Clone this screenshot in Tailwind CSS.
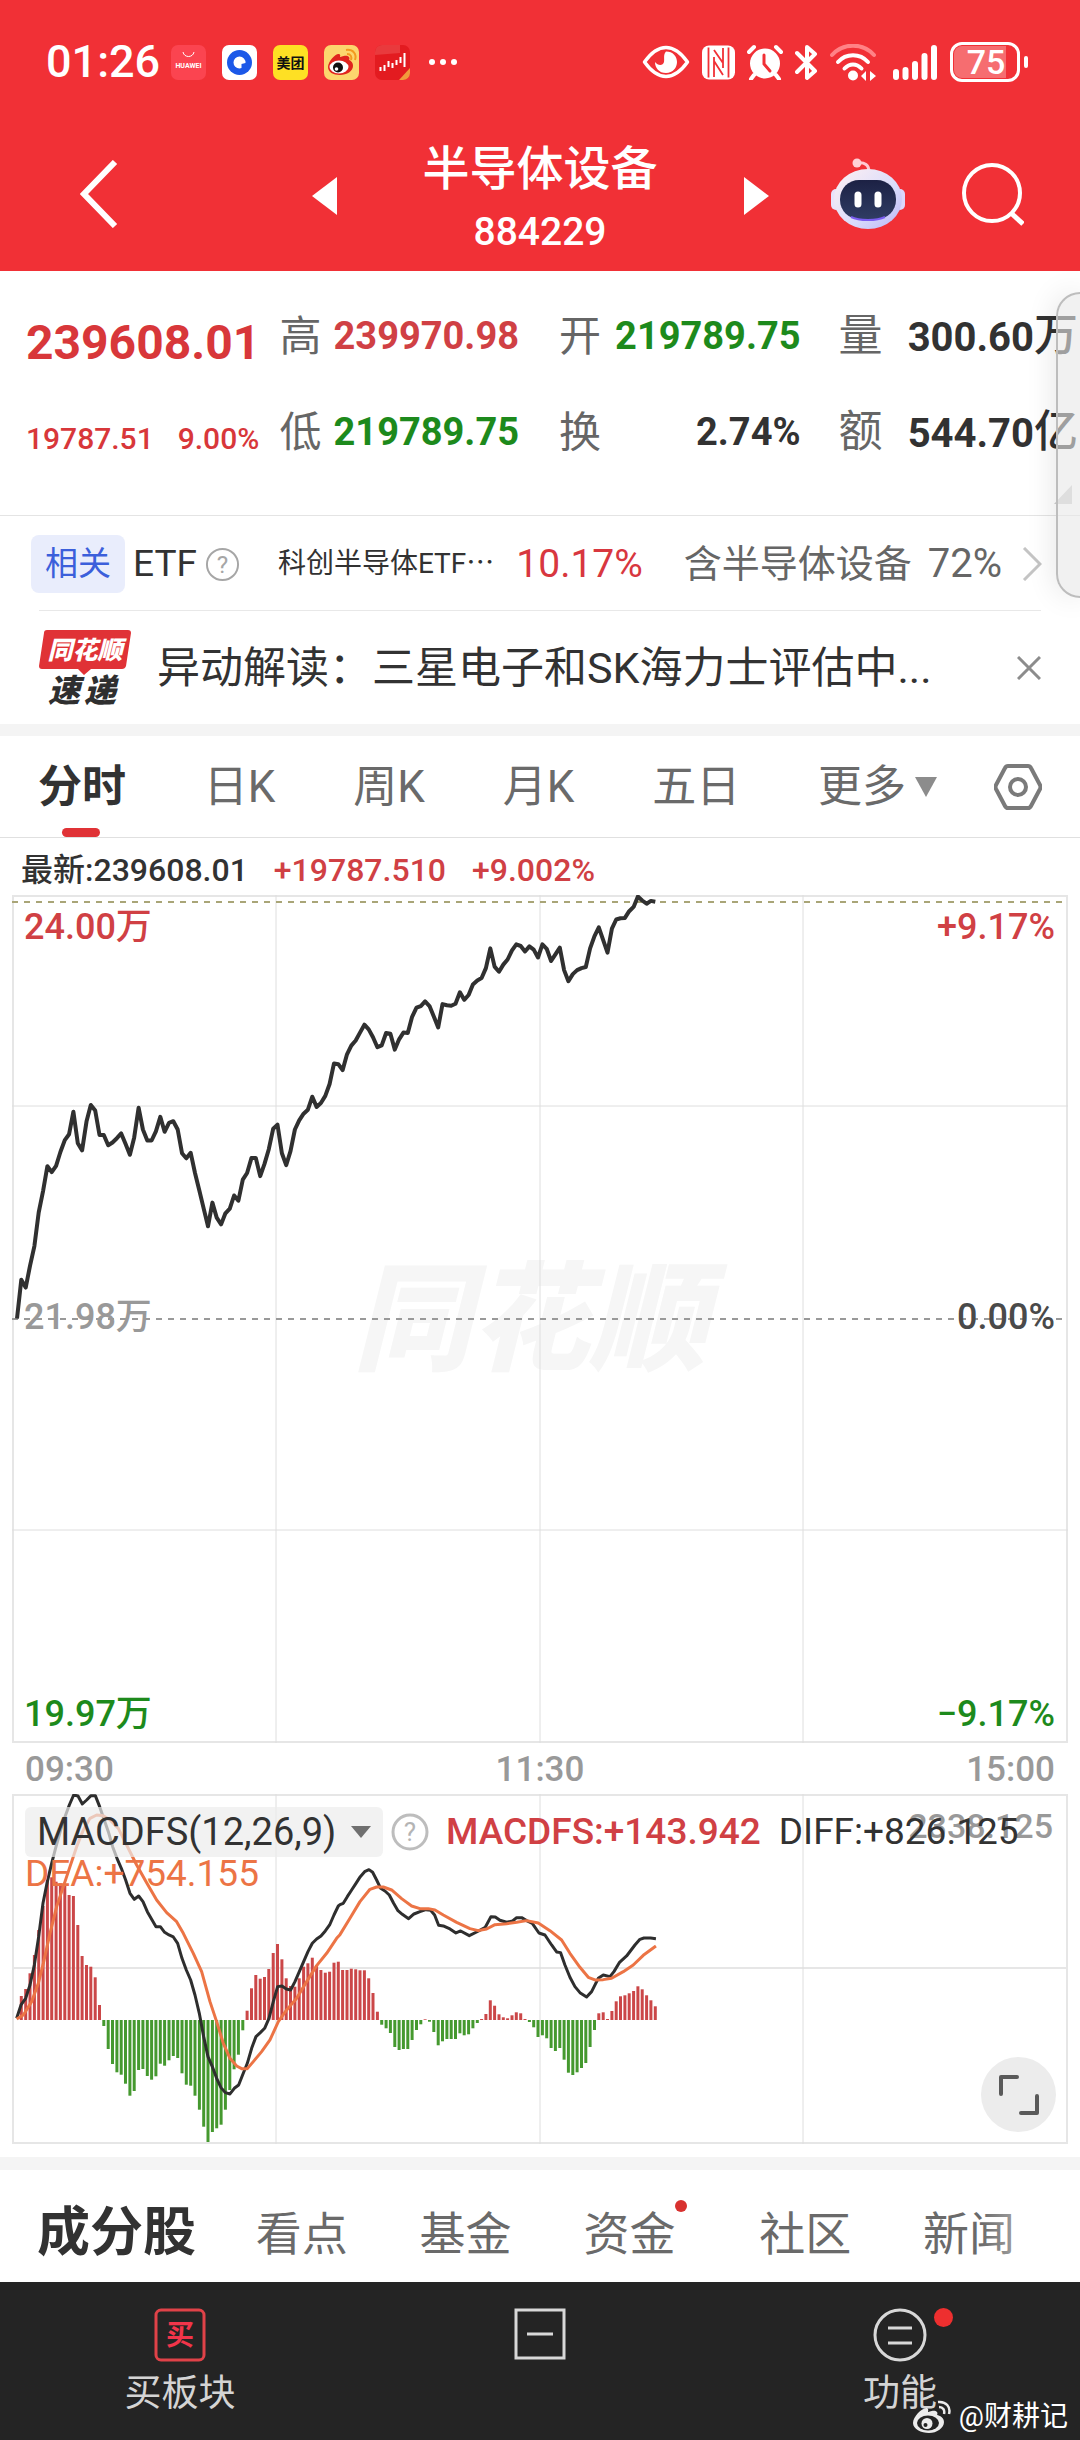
<!DOCTYPE html>
<html lang="zh-CN">
<head>
    <meta charset="UTF-8">
    <meta name="viewport" content="width=device-width, initial-scale=1.0">
    <title>半导体设备 884229</title>
    <script src="https://cdn.jsdelivr.net/npm/@tailwindcss/browser@4"></script>
</head>
<body class="bg-white text-[#323232] font-['Roboto','Noto_Sans_CJK_SC',sans-serif] overflow-x-hidden">

    <!-- Header -->
    <header class="bg-[#f13036] text-white pt-11 pb-4">
        <div class="flex items-center h-9 pl-[46px] pr-[52px]">
            <span class="text-[45px] leading-9 font-medium">01:26</span>
            <div class="flex items-center gap-4 ml-[11px]">
                <svg class="w-[35px] h-[35px]" viewBox="0 0 35 35">
                    <rect width="35" height="35" rx="7" fill="#fb4450"/>
                    <path d="M12 7c1 6 10 6 11 0" fill="none" stroke="#fff" stroke-width="1"/>
                    <text x="17.5" y="23" text-anchor="middle" fill="#fff" class="text-[7px] font-bold">HUAWEI</text>
                </svg>
                <svg class="w-[35px] h-[35px]" viewBox="0 0 35 35">
                    <rect width="35" height="35" rx="7" fill="#fff"/>
                    <circle cx="17.5" cy="17.5" r="12.5" fill="#1c58e8"/>
                    <path d="M17.5 11.500a6 6 0 1 0 0 12l2-.5 0-4 4-1a6 6 0 0 0-6-6.500z" fill="#fff"/>
                </svg>
                <svg class="w-[35px] h-[35px]" viewBox="0 0 35 35">
                    <rect width="35" height="35" rx="7" fill="#fee024"/>
                    <text x="17.5" y="23" text-anchor="middle" fill="#111" class="text-[14px] font-bold">美团</text>
                </svg>
                <svg class="w-[35px] h-[35px]" viewBox="0 0 35 35">
                    <rect width="35" height="35" rx="7" fill="#fcd66e"/>
                    <path d="M4 22c0-6 8-14 11-13 2 .5 1 3 1 3s7-3 9 0c1 1.500 0 3 0 3s4 1 4 6c0 5-6 9-13 9S4 27 4 22z" fill="#e0241e"/>
                    <ellipse cx="15" cy="22" rx="9.500" ry="6.500" fill="#fff"/>
                    <circle cx="14" cy="22.500" r="5" fill="#111"/>
                    <circle cx="12.500" cy="24" r="1.800" fill="#fff"/>
                    <path d="M23 9c4 0 5 3 4 6M22 5c7-1 11 4 9 10" fill="none" stroke="#f39a1f" stroke-width="2"/>
                </svg>
                <svg class="w-[35px] h-[35px]" viewBox="0 0 35 35">
                    <rect width="35" height="35" rx="7" fill="#e31b20"/>
                    <path d="M0 10V7a7 7 0 0 1 7-7h18v8z" fill="#e93a3d"/>
                    <path d="M35 23v5a7 7 0 0 1-7 7h-4z" fill="#f19a3c"/>
                    <path d="M5.500 22v4M9.500 20v6M13.500 16v6M17.500 18v5M21.500 15v5M25.500 12v6M29.500 8v14" stroke="#fff" stroke-width="2"/>
                </svg>
            </div>
            <svg class="w-8 h-2 ml-4" viewBox="0 0 32 8" fill="#fff"><circle cx="6" cy="4" r="3"/><circle cx="17" cy="4" r="3"/><circle cx="28" cy="4" r="3"/></svg>

            <div class="flex items-center gap-3 ml-auto">
                <svg class="w-12 h-9" viewBox="0 0 48 36">
                    <path d="M2.500 18C10 7.500 17 3.500 24 3.500S38 7.500 45.500 18C38 28.500 31 32.500 24 32.500S10 28.500 2.500 18z" fill="none" stroke="#fff" stroke-width="3.500" stroke-linejoin="round"/>
                    <path d="M24 7.500c7 0 11 5 11 10.500S31 29 24 29s-11-5-11-11c3 4 8 4 9 0 .7-4-1-7 2-10.500z" fill="#fff"/>
                </svg>
                <svg class="w-[33px] h-[35px]" viewBox="0 0 33 35">
                    <rect y=".5" width="33" height="34" rx="7" fill="#fff"/>
                    <path d="M6.500 2.500v30M26.500 2.500v30M12 32V12M21 3v20M12 5l9 13M12 16l9 14" fill="none" stroke="#f13036" stroke-width="1.800"/>
                </svg>
                <svg class="w-9 h-9" viewBox="0 0 36 36">
                    <circle cx="18" cy="19.500" r="15" fill="#fff"/>
                    <path d="M2 8l5-5M34 8l-5-5M7 31l-3 4M29 31l3 4" stroke="#fff" stroke-width="4" stroke-linecap="round"/>
                    <path d="M17 11v9l6 7" fill="none" stroke="#f13036" stroke-width="3" stroke-linecap="round"/>
                </svg>
                <svg class="w-[23px] h-[37px]" viewBox="0 0 23 37">
                    <path d="M2 9l18 18-8 7V3l8 7L2 28" fill="none" stroke="#fff" stroke-width="4" stroke-linecap="round" stroke-linejoin="round"/>
                </svg>
                <svg class="w-[46px] h-[37px]" viewBox="0 0 46 37">
                    <path d="M2 11C13-1.500 33-1.500 44 11" fill="none" stroke="#ff8286" stroke-width="4" stroke-linecap="round"/>
                    <path d="M8 18c8-9 22-9 30 0M14.500 24.500c5-5.500 12-5.500 17 0" fill="none" stroke="#fff" stroke-width="4" stroke-linecap="round"/>
                    <circle cx="23" cy="31.500" r="5" fill="#fff"/>
                    <path d="M31 32l5-5v10zM46 32l-6-5v10z" fill="#fff"/>
                </svg>
                <svg class="w-[46px] h-[37px] ml-1" viewBox="0 0 46 37" stroke="#fff" stroke-width="6" stroke-linecap="round">
                    <path d="M4 28v5M13.500 26v7M23 20v13M32.500 12v21M42 4v29"/>
                </svg>
                <div class="flex items-center">
                    <div class="w-[70px] h-10 rounded-[12px] border-[3px] border-white p-px">
                        <div class="h-full rounded-l-[8px] bg-[#f66d70] w-[52px] flex items-center justify-center text-[34px] font-medium pl-3">75</div>
                    </div>
                    <span class="w-1 h-3 ml-1 rounded-full bg-white"></span>
                </div>
            </div>
        </div>

        <nav class="grid grid-cols-[1fr_auto_1fr] items-center pt-[65px]">
            <div class="pl-20 pb-3">
                <button aria-label="返回" class="block">
                    <svg class="w-[38px] h-[68px]" viewBox="0 0 38 68"><path d="M35 2L4 34l31 32" fill="none" stroke="#fff" stroke-width="6"/></svg>
                </button>
            </div>
            <div class="flex items-center">
                <button aria-label="上一个" class="pb-2"><svg class="w-[25px] h-[38px]" viewBox="0 0 25 38"><path d="M25 0v38L0 19z" fill="#fff"/></svg></button>
                <div class="mx-[86px] text-center">
                    <h1 class="text-[47px] leading-[48px] font-medium">半导体设备</h1>
                    <p class="mt-4 text-[39px] leading-[46px] font-medium">884229</p>
                </div>
                <button aria-label="下一个" class="pb-2"><svg class="w-[25px] h-[38px]" viewBox="0 0 25 38"><path d="M0 0v38l25-19z" fill="#fff"/></svg></button>
            </div>
            <div class="flex items-center justify-end gap-14 pr-14 pb-3">
                <button aria-label="智能助手">
                    <svg class="w-[76px] h-[72px]" viewBox="0 0 76 72">
                        <defs>
                            <linearGradient id="shell" x1="0" y1="0" x2="1" y2="1">
                                <stop offset="0" stop-color="#fff0f2"/><stop offset=".6" stop-color="#d9dcfb"/><stop offset="1" stop-color="#b9b4f7"/>
                            </linearGradient>
                            <linearGradient id="visor" x1="0" y1="0" x2="0" y2="1">
                                <stop offset="0" stop-color="#1c2144"/><stop offset="1" stop-color="#2f3c63"/>
                            </linearGradient>
                        </defs>
                        <path d="M27 5c8-1 12 2 12 9" fill="none" stroke="#ffc9d2" stroke-width="3"/>
                        <circle cx="27" cy="5" r="4.500" fill="#ffd0d6"/>
                        <rect x="1" y="31" width="10" height="21" rx="5" fill="#e9e3fb"/>
                        <rect x="65" y="31" width="10" height="21" rx="5" fill="#dcd8fb"/>
                        <ellipse cx="38" cy="41" rx="34" ry="30" fill="url(#shell)"/>
                        <rect x="10" y="22" width="56" height="39" rx="19" fill="url(#visor)"/>
                        <path d="M21 59c8 4 26 4 34 0" fill="none" stroke="#7a5cf0" stroke-width="2"/>
                        <path d="M28 37v9M48 37v9" stroke="#fff" stroke-width="7" stroke-linecap="round"/>
                    </svg>
                </button>
                <button aria-label="搜索">
                    <svg class="w-[62px] h-[64px]" viewBox="0 0 62 64" fill="none" stroke="#fff" stroke-width="4"><circle cx="30" cy="31" r="28"/><path d="M49 51l12 11" stroke-width="5"/></svg>
                </button>
            </div>
        </nav>
    </header>

    <main>
        <!-- Quote -->
        <section class="relative overflow-hidden">
            <dl class="grid grid-cols-[253fr_279fr_279fr_241fr] pl-[26px] pt-[35px] pb-[53px] border-b border-[#e4e4e4] font-bold whitespace-nowrap">
                <div class="flex flex-col gap-9 text-[#d8373a]">
                    <div class="flex items-end h-[60px]"><dd class="text-[48px] leading-[46px]">239608.01</dd></div>
                    <div class="flex items-end h-[60px] gap-6 text-[30px] leading-[46px] font-medium"><dd>19787.51</dd><dd>9.00%</dd></div>
                </div>
                <div class="flex flex-col gap-9 pr-10">
                    <div class="flex items-center justify-between h-[60px]"><dt class="text-[42px] font-normal text-[#666]">高</dt><dd class="text-[38px] text-[#d04044]">239970.98</dd></div>
                    <div class="flex items-center justify-between h-[60px]"><dt class="text-[42px] font-normal text-[#666]">低</dt><dd class="text-[38px] text-[#1d8a1c]">219789.75</dd></div>
                </div>
                <div class="flex flex-col gap-9 pr-[38px]">
                    <div class="flex items-center justify-between h-[60px]"><dt class="text-[42px] font-normal text-[#666]">开</dt><dd class="text-[38px] text-[#1d8a1c]">219789.75</dd></div>
                    <div class="flex items-center justify-between h-[60px]"><dt class="text-[42px] font-normal text-[#666]">换</dt><dd class="text-[38px]">2.74%</dd></div>
                </div>
                <div class="flex flex-col gap-9 pr-[2px]">
                    <div class="flex items-center justify-between h-[60px]"><dt class="text-[44px] font-normal text-[#666]">量</dt><dd class="text-[40px]">300.60<span class="text-[44px] font-medium">万</span></dd></div>
                    <div class="flex items-center justify-between h-[60px]"><dt class="text-[44px] font-normal text-[#666]">额</dt><dd class="text-[40px]">544.70<span class="text-[44px] font-medium">亿</span></dd></div>
                </div>
            </dl>
            <svg class="absolute z-10 bottom-3 right-2 w-[18px] h-[19px]" viewBox="0 0 18 19"><path d="M18 0v19H0z" fill="#cfcfcf"/></svg>
        </section>

        <!-- ETF -->
        <section class="relative flex items-center h-[94px] pl-[31px] pr-[38px] pt-[2px] whitespace-nowrap">
            <span class="bg-[#e9edfc] text-[#3b5fdb] rounded-lg px-[14px] text-[33px] leading-[58px]">相关</span>
            <span class="ml-2 text-[37px]">ETF</span>
            <svg class="w-[35px] h-[35px] ml-2" viewBox="0 0 36 36"><circle cx="18" cy="18" r="16" fill="none" stroke="#a6a6a6" stroke-width="2"/><text x="18" y="27" text-anchor="middle" fill="#a6a6a6" class="text-[25px]">?</text></svg>
            <span class="ml-[38px] text-[28px]">科创半导体ETF⋯</span>
            <span class="ml-[22px] text-[39px] text-[#d8373f]">10.17%</span>
            <a href="#" class="flex items-center ml-auto text-[#666] text-[38px]">含半导体设备<span class="ml-4 text-[40px]">72%</span>
                <svg class="w-5 h-[34px] ml-5" viewBox="0 0 20 34"><path d="M2 1l16 16L2 33" fill="none" stroke="#c4c4c4" stroke-width="3"/></svg>
            </a>
            <!-- floating drawer handle -->
            <div class="absolute z-10 bottom-3 right-0 w-6 h-[306px] rounded-l-[36px] border-2 border-r-0 border-[#bdbdbd] bg-[#e8e8e8]/60 shadow-[0_0_30px_rgba(0,0,0,0.12)]"></div>
        </section>

        <!-- News -->
        <section class="flex items-center mx-[39px] h-[114px] border-t border-[#e8e8e8]">
            <svg class="w-[92px] h-[80px] shrink-0" viewBox="0 0 92 80">
                <path d="M8 2h81q3 0 3 3l-5 33q-1 3-4 3H52l-7 6-6-6H3q-3 0-3-3L5 5q0-3 3-3z" fill="#e03236"/>
                <text x="46" y="31" text-anchor="middle" fill="#fff" class="text-[25px] font-black italic">同花顺</text>
                <text x="9" y="74" fill="#2f2f2f" class="text-[32px] font-black italic">速</text>
                <text x="45" y="74" fill="#2f2f2f" class="text-[32px] font-black italic">递</text>
            </svg>
            <a href="#" class="flex-1 ml-[26px] text-[43px] leading-[60px] whitespace-nowrap">异动解读：三星电子和SK海力士评估中...</a>
            <button aria-label="关闭"><svg class="w-6 h-6" viewBox="0 0 24 24"><path d="M1 1l22 22M23 1L1 23" stroke="#8c8c8c" stroke-width="3"/></svg></button>
        </section>

        <!-- Period tabs -->
        <nav class="border-t-[12px] border-[#f4f4f4]">
            <div class="flex items-center justify-between h-[102px] pl-[38px] pr-[38px] border-b border-[#e0e0e0] text-[44px] text-[#6a6a6a] whitespace-nowrap">
                <a href="#" class="relative flex items-center h-full font-bold text-[#323232]">分时<span class="absolute bottom-0 left-6 w-[38px] h-[9px] rounded-full bg-[#e03236]"></span></a>
                <a href="#">日K</a>
                <a href="#">周K</a>
                <a href="#">月K</a>
                <a href="#">五日</a>
                <div class="flex items-center gap-14">
                    <a href="#" class="flex items-center gap-2">更多<svg class="w-6 h-[22px]" viewBox="0 0 24 22"><path d="M1 1h22L12 21z" fill="#8c8c8c"/></svg></a>
                    <button aria-label="设置"><svg class="w-12 h-12" viewBox="0 0 48 48" fill="none" stroke="#7a7a7a" stroke-width="4"><path d="M14 3h20q2 0 3 2l9 17q1 2 0 4l-9 17q-1 2-3 2H14q-2 0-3-2L2 26q-1-2 0-4l9-17q1-2 3-2z"/><circle cx="24" cy="24" r="8"/></svg></button>
                </div>
            </div>
        </nav>

        <!-- Intraday chart -->
        <section class="px-3">
            <p class="flex gap-[26px] pt-2 pl-[9px] text-[32px] leading-[49px] font-medium text-[#d04044]"><span class="text-[#323232]">最新:239608.01</span><span>+19787.510</span><span>+9.002%</span></p>
            <svg class="block w-full h-auto" viewBox="0 0 1056 848">
                <text x="518" y="466" text-anchor="middle" fill="#f6f6f6" class="text-[118px] font-black italic">同花顺</text>
                <g fill="none" stroke="#e6e6e6" stroke-width="2">
                    <rect x="1" y="1" width="1054" height="846"/>
                    <path d="M264 0v848M528 0v848M791 0v848M0 211h1056M0 635h1056" stroke="#dedede" stroke-width="1"/>
                </g>
                <path d="M0 7h1056" stroke="#a9a577" stroke-width="2" stroke-dasharray="6 6"/>
                <path d="M0 424h1056" stroke="#999" stroke-width="2" stroke-dasharray="6 6"/>
                <polyline id="price" fill="none" stroke="#303030" stroke-width="4" stroke-linejoin="round"/>
                <g class="text-[36px] font-medium">
                    <text x="12" y="44" fill="#d04044">24.00万</text>
                    <text x="1043" y="44" text-anchor="end" fill="#d04044">+9.17%</text>
                    <text x="12" y="434" fill="#999">21.98万</text>
                    <text x="1043" y="434" text-anchor="end" fill="#4a4a4a">0.00%</text>
                    <text x="12" y="831" fill="#1d8a1c">19.97万</text>
                    <text x="1043" y="831" text-anchor="end" fill="#1d8a1c">−9.17%</text>
                </g>
            </svg>
            <div class="flex justify-between px-[13px] pt-[2px] text-[35px] leading-[49px] font-medium text-[#999]"><span>09:30</span><span>11:30</span><span>15:00</span></div>
        </section>

        <!-- MACD -->
        <section class="relative mx-3">
            <svg class="block w-full h-auto" viewBox="0 0 1056 350">
                <g fill="none" stroke="#e6e6e6" stroke-width="2">
                    <rect x="1" y="1" width="1054" height="348"/>
                    <path d="M0 174h1056"/>
                    <path d="M264 0v350M528 0v350M791 0v350" stroke="#dedede" stroke-width="1"/>
                </g>
                <g id="macd" stroke-width="3"></g>
                <g fill="none" stroke="#2e2e2e" stroke-width="9" stroke-linejoin="round">
                    <polyline transform="translate(-12 -94) scale(.3333)" points="50,955 63,915 77,895 90,855 103,795 116,710 129,610 142,545 155,490 168,440 182,390 195,350 208,315 221,285 234,288 247,312 260,300 273,287 286,287 299,320 312,358 325,395 338,440 351,475 364,505 377,540 390,580 403,598 416,588 429,605 442,635 455,658 468,680 481,680 494,697 507,705 520,711 533,730 546,775 559,810 572,840 585,885 598,940 611,1010 624,1070 637,1100 650,1135 663,1163 676,1178 690,1182 703,1165 716,1155 729,1122 742,1090 755,1045 768,1010 781,998 794,985 807,955 820,905 833,860 846,858 859,867 872,870 885,845 898,815 911,785 924,755 937,730 950,717 963,708 976,693 989,675 1002,645 1015,618 1020,614 1030,610 1042,590 1055,570 1068,550 1081,530 1094,515 1107,509 1118,517 1130,540 1142,565 1155,573 1168,585 1181,610 1194,632 1207,643 1226,656 1242,642 1260,635 1278,629 1292,631 1304,645 1316,676 1330,678 1350,687 1368,699 1382,693 1408,707 1430,696 1456,682 1473,650 1486,651 1500,661 1520,667 1538,663 1550,653 1565,653 1580,662 1597,670 1617,699 1635,705 1655,735 1670,756 1682,758 1695,795 1710,832 1725,860 1740,878 1760,891 1775,875 1795,835 1810,825 1830,830 1842,815 1858,788 1880,768 1905,735 1920,718 1932,714 1952,714 1968,716"/>
                    <polyline stroke="#ec7445" transform="translate(-12 -94) scale(.3333)" points="50,957 70,945 95,905 115,850 130,790 150,700 170,620 190,560 210,500 230,440 250,390 270,355 290,345 310,347 330,360 355,385 380,435 410,495 440,548 470,600 500,638 530,665 550,700 580,760 605,815 630,905 650,965 670,1030 690,1075 710,1098 725,1106 742,1106 760,1085 785,1055 810,1020 835,965 860,930 890,895 920,845 950,797 980,760 1010,715 1020,704 1050,655 1080,605 1110,568 1130,561 1150,561 1175,570 1205,596 1235,618 1260,626 1285,626 1305,630 1330,645 1370,667 1410,686 1435,692 1460,687 1485,674 1520,671 1550,667 1580,662 1615,669 1650,692 1685,720 1710,760 1740,802 1765,832 1785,840 1810,839 1835,835 1870,815 1900,795 1930,766 1968,738"/>
                </g>
                <text x="1041" y="44" text-anchor="end" fill="#999" class="text-[34px] font-medium">2338.125</text>
            </svg>
            <div class="absolute top-[13px] left-[13px] text-[37px] leading-[50px] whitespace-nowrap">
                <div class="flex items-center">
                    <button class="flex items-center justify-between w-[358px] h-[50px] rounded-md bg-[#ededed]/70 px-3 text-[38px]">MACDFS(12,26,9)<svg class="w-5 h-3" viewBox="0 0 20 12"><path d="M0 0h20L10 12z" fill="#707070"/></svg></button>
                    <svg class="w-[38px] h-[38px] ml-2" viewBox="0 0 38 38"><circle cx="19" cy="19" r="17" fill="none" stroke="#bdbdbd" stroke-width="3"/><text x="19" y="28" text-anchor="middle" fill="#b4b4b4" class="text-[26px]">?</text></svg>
                    <span class="ml-[17px] text-[#d04044] font-medium">MACDFS:+143.942</span>
                    <span class="ml-[18px]">DIFF:+826.125</span>
                </div>
                <p class="leading-[34px] text-[#ec7445]">DEA:+754.155</p>
            </div>
            <button aria-label="全屏" class="absolute right-3 bottom-3 size-[75px] rounded-full bg-[#ececec] flex items-center justify-center">
                <svg class="w-10 h-10" viewBox="0 0 40 40" fill="none" stroke="#5a5a5a" stroke-width="4" stroke-linecap="round" stroke-linejoin="round"><path d="M2 19V2h16M38 21v17H22"/></svg>
            </button>
        </section>

        <!-- Content tabs -->
        <nav class="relative mt-[13px] border-t-[13px] border-[#f4f4f4]">
            <div class="flex items-center justify-between h-[112px] pt-4 pl-[37px] pr-[65px] text-[46px] text-[#6a6a6a] whitespace-nowrap">
                <a href="#" class="-mr-3 text-[53px] font-bold text-[#323232]">成分股</a>
                <a href="#">看点</a>
                <a href="#">基金</a>
                <a href="#" class="relative pr-3">资金<span class="absolute top-0 right-0 size-3 rounded-full bg-[#d8312f]"></span></a>
                <a href="#">社区</a>
                <a href="#">新闻</a>
            </div>
            <div class="absolute right-0 top-0 h-full w-[100px] bg-gradient-to-r from-white/0 to-white pointer-events-none"></div>
        </nav>
    </main>

    <!-- Bottom bar -->
    <footer class="relative grid grid-cols-3 bg-[#242424] text-[#d4d4d4] text-[37px] leading-[52px] h-[159px] pt-[26px]">
        <a href="#" class="flex flex-col items-center gap-[6px]">
            <svg class="w-[52px] h-[54px]" viewBox="0 0 52 54"><rect x="2" y="2" width="48" height="50" rx="5" fill="none" stroke="#e04248" stroke-width="3"/><text x="26" y="37" text-anchor="middle" fill="#f2354a" class="text-[28px] font-bold">买</text></svg>
            买板块
        </a>
        <a href="#" aria-label="持仓" class="flex flex-col items-center">
            <svg class="w-[52px] h-[52px]" viewBox="0 0 52 52" fill="none" stroke="#d8d8d8" stroke-width="3"><rect x="2" y="2" width="48" height="48"/><path d="M13 26h26"/></svg>
        </a>
        <a href="#" class="relative flex flex-col items-center gap-[6px]">
            <svg class="w-[54px] h-[54px]" viewBox="0 0 54 54" fill="none" stroke="#d8d8d8" stroke-width="3"><circle cx="27" cy="27" r="25"/><path d="M15 20h24M15 35h24"/></svg>
            <span class="absolute top-0 left-1/2 ml-[34px] size-[19px] rounded-full bg-[#ee2f2f]"></span>
            功能
        </a>
        <!-- author mark -->
        <div class="absolute right-3 bottom-1 flex items-center text-[28px] leading-10 text-white">
            <svg class="w-[38px] h-[34px] mr-2" viewBox="0 0 38 34">
                <path d="M0 23c0-7 10-16 14-15 2 1 1 4 1 4s7-3 9 0c1 1 0 3 0 3s7 1 7 7-7 11-15 11S0 29 0 23z" fill="#ececec"/>
                <ellipse cx="15" cy="23" rx="11" ry="7.500" fill="#242424"/>
                <circle cx="14" cy="23.500" r="5.500" fill="#ececec"/>
                <circle cx="12.500" cy="25" r="2" fill="#242424"/>
                <path d="M26 7c4 0 6 3 5 7M25 2c8-1 13 5 11 12" fill="none" stroke="#ececec" stroke-width="2.500"/>
            </svg>@财耕记
        </div>
    </footer>

    <script>
        // one value per minute from 09:30
        const price = [
            1488, 1390, 1410, 1355, 1305, 1220, 1165, 1103, 1118, 1102, 1067, 1037, 1022, 965, 1045, 1063, 990, 948, 962, 1024,
            1024, 1050, 1043, 1032, 1020, 1046, 1074, 1030, 955, 1010, 1038, 1038, 1015, 978, 1016, 993, 989, 1010, 1070, 1083,
            1069, 1120, 1165, 1210, 1255, 1195, 1233, 1250, 1222, 1210, 1177, 1190, 1137, 1120, 1082, 1082, 1128, 1097, 1060, 1008,
            998, 1070, 1100, 1065, 1010, 987, 970, 960, 927, 953, 943, 925, 895, 843, 845, 860, 820, 798, 785, 765,
            745, 757, 777, 802, 797, 766, 768, 808, 782, 765, 766, 725, 702, 698, 686, 698, 724, 752, 693, 696,
            697, 692, 663, 682, 670, 643, 633, 627, 602, 552, 598, 611, 593, 580, 557, 542, 546, 560, 547, 555,
            575, 542, 553, 584, 567, 550, 607, 635, 617, 607, 602, 599, 552, 521, 499, 531, 563, 502, 479, 476,
            475, 458, 447, 421, 431, 439, 432, 434
        ];
        const macd = [
            0, 72, 93, 140, 195, 270, 342, 420, 428, 415, 410, 408, 375, 372, 285, 192, 165, 160, 128, 45,
            -18, -87, -132, -157, -164, -191, -227, -213, -150, -147, -168, -179, -169, -131, -137, -121, -108, -114, -160, -194,
            -197, -227, -269, -320, -366, -336, -325, -314, -269, -210, -148, -104, -31, 28, 95, 135, 124, 129, 153, 201,
            228, 182, 125, 102, 100, 125, 160, 170, 187, 165, 150, 142, 145, 172, 175, 150, 150, 154, 152, 149,
            149, 125, 81, 25, -14, -25, -39, -81, -90, -87, -87, -60, -30, -13, 2, -5, -36, -76, -64, -57,
            -57, -57, -40, -46, -43, -25, -9, 3, 18, 59, 43, 17, 8, 5, 14, 23, 20, 3, -6, -22,
            -51, -46, -55, -84, -93, -84, -119, -158, -165, -157, -144, -129, -81, -30, 20, 23, 3, 27, 56, 71,
            74, 80, 87, 101, 92, 74, 59, 41
        ];
        const x = i => 5 + i * 4.342;

        document.getElementById("price").setAttribute("points",
            price.map((v, i) => `${x(i).toFixed(1)},${((v - 417) * 0.3954).toFixed(1)}`).join(" "));

        document.getElementById("macd").innerHTML = macd.map((v, i) =>
            `<path d="M${x(i).toFixed(1)} 226v${(-v / 3).toFixed(1)}" stroke="${v > 0 ? "#cb4748" : "#45992f"}"/>`).join("");
    </script>
</body>
</html>
